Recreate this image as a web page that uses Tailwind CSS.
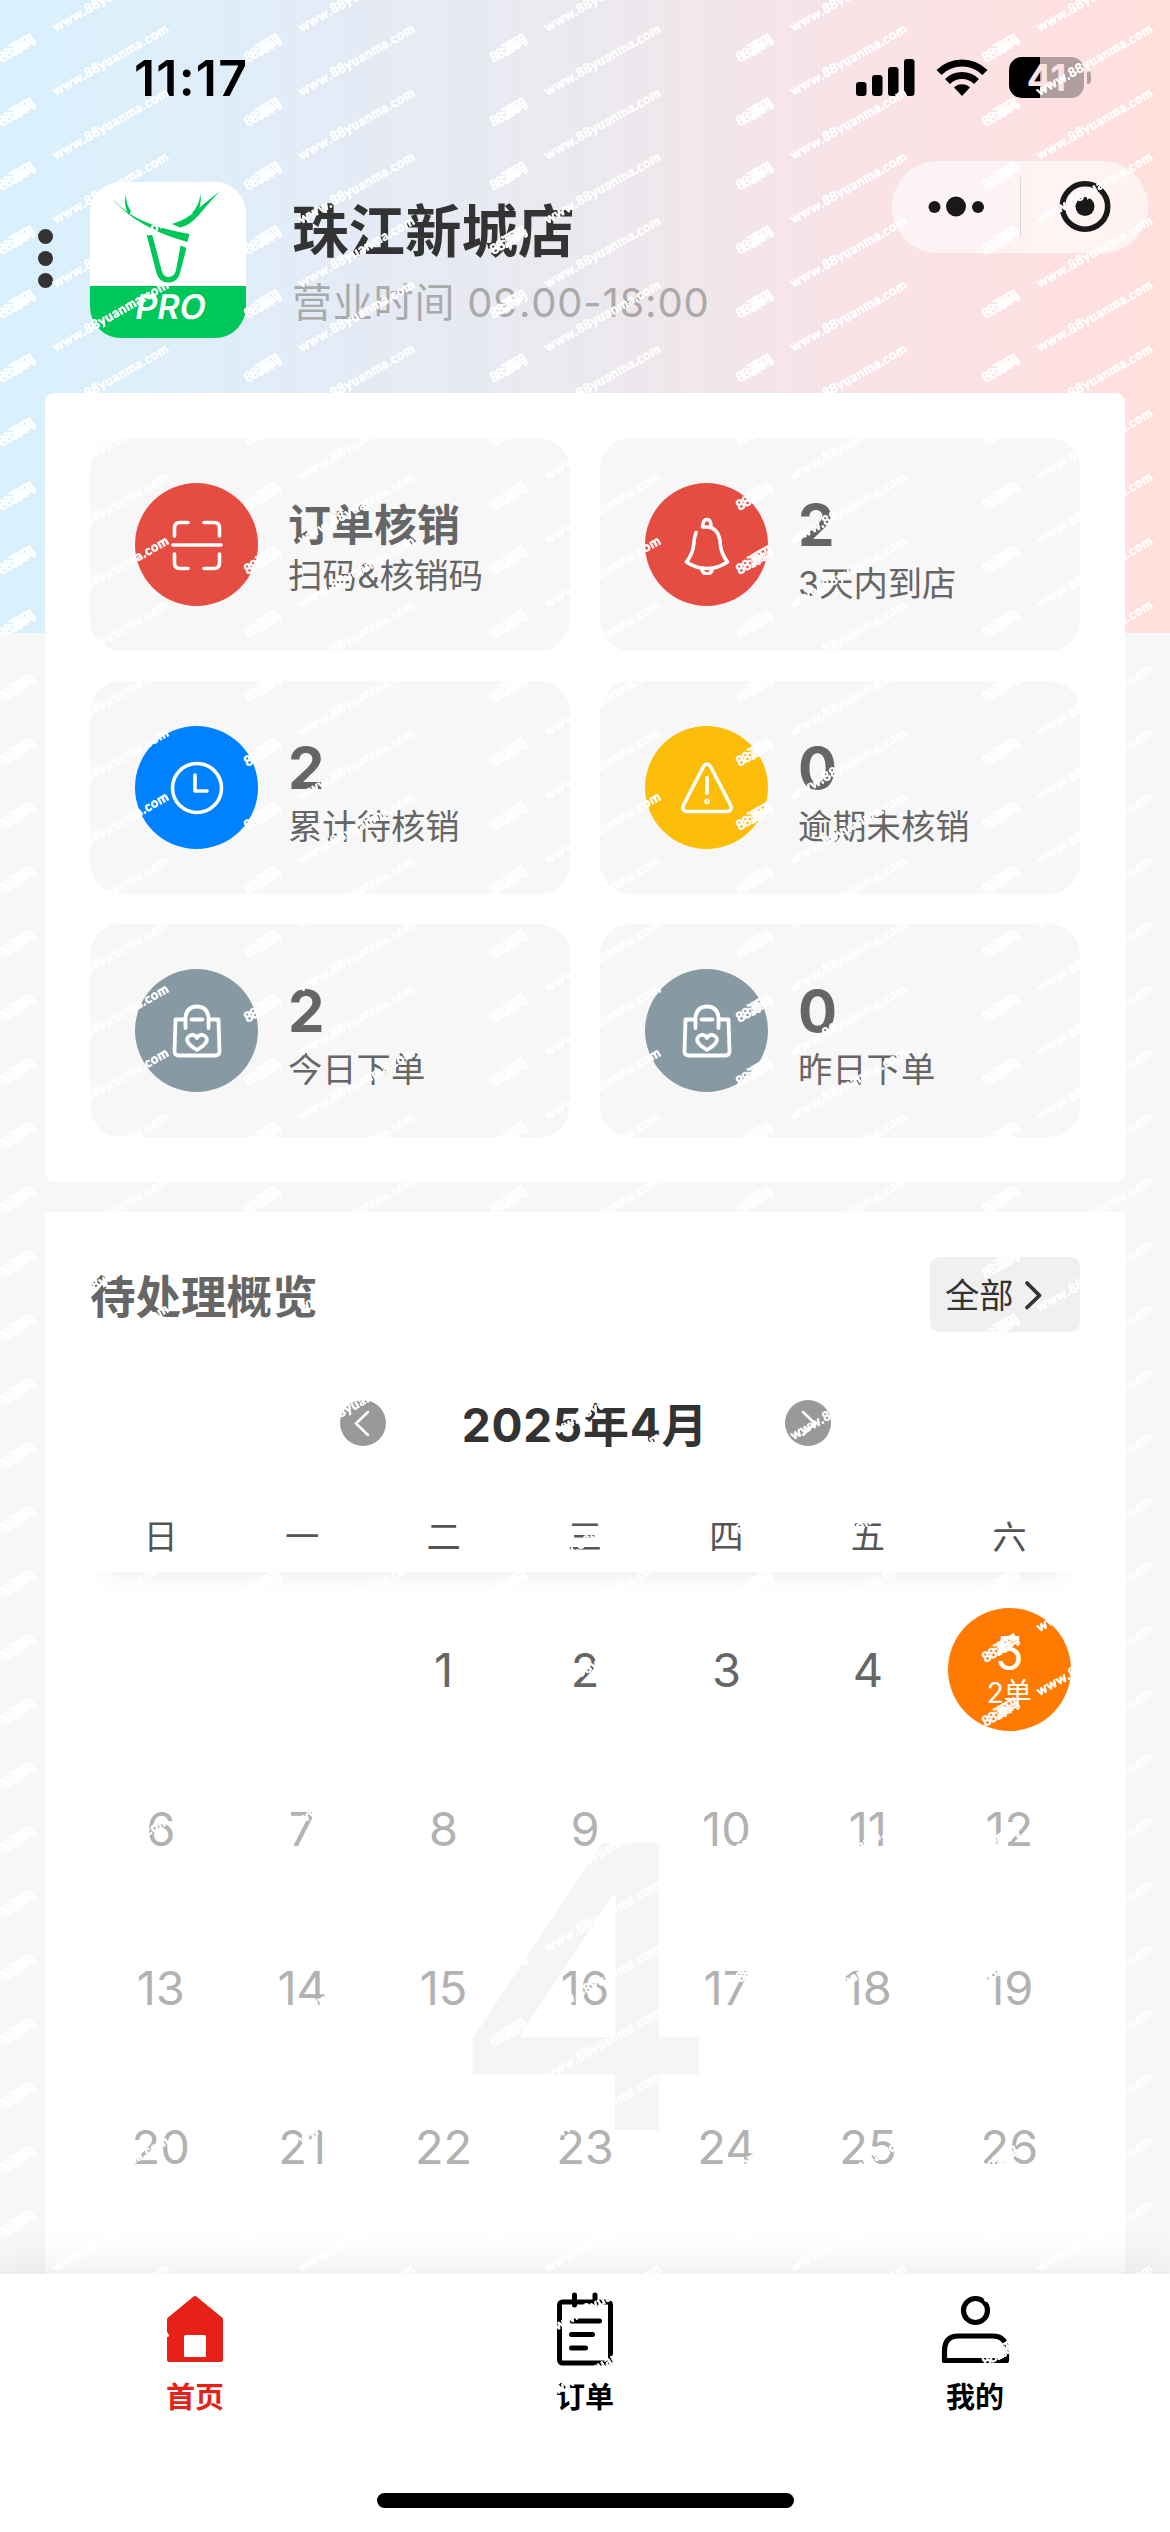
<!DOCTYPE html>
<html lang="zh-CN">
<head>
<meta charset="utf-8">
<title>珠江新城店</title>
<script src="https://cdn.jsdelivr.net/npm/@tailwindcss/browser@4"></script>
</head>
<body class="relative w-[1170px] h-[2532px] overflow-hidden bg-[#f7f7f7] font-['Inter','Noto_Sans_CJK_SC',sans-serif] text-[#666]">

<!-- header gradient -->
<div class="absolute inset-x-0 top-0 h-[633px] bg-[linear-gradient(to_right,#d8f1fd_0%,#e4ebf6_30%,#ebe9ef_50%,#f6e4e8_68%,#ffe0e1_92%,#ffe0dc_100%)]"></div>

<div class="relative flex flex-col h-[2274px] overflow-hidden">
  <!-- status bar -->
  <div class="flex h-[160px] shrink-0 items-start pl-[134px] pr-[79px]">
    <div class="mt-[48px] text-[50px] leading-[60px] font-semibold text-black tracking-[1.200px]">11:17</div>
    <div class="ml-auto mt-[57px] flex items-start">
      <svg class="mt-[2px] mr-[21px]" width="59" height="37" viewBox="0 0 59 37"><rect x="0" y="23" width="10.5" height="14" rx="3"/><rect x="16" y="16" width="10.5" height="21" rx="3"/><rect x="32" y="8" width="10.5" height="29" rx="3"/><rect x="48" y="0" width="10.5" height="37" rx="3"/></svg>
      <svg class="mt-[2px] mr-[21px]" width="52" height="37" viewBox="0 0 52 37"><g fill="none" stroke="#000" stroke-width="7"><path d="M3 13.5a32.500 32.500 0 0 1 46 0"/><path d="M11.500 22.500a20.500 20.500 0 0 1 29 0"/></g><path d="M26 37l-8-8.500a11.500 11.500 0 0 1 16 0z"/></svg>
      <div class="h-[41px] w-[75px] rounded-[13px] bg-[linear-gradient(to_right,#000_31px,#b09d9f_31px)] text-center text-[37px] leading-[41px] font-bold text-[#fbe2e4]">41</div>
      <div class="ml-[3px] mt-[14px] h-[13px] w-[4px] rounded-r-full bg-[#b09d9f]"></div>
    </div>
  </div>

  <!-- shop header -->
  <div class="flex h-[233px] shrink-0 items-start pl-[37px] pr-[21px]">
    <div class="mt-[69px] flex w-[16px] flex-col items-center gap-[7px]">
      <i class="size-[15px] rounded-full bg-[#333]"></i><i class="size-[15px] rounded-full bg-[#333]"></i><i class="size-[15px] rounded-full bg-[#333]"></i>
    </div>
    <div class="relative ml-[37px] mt-[22px] flex size-[156px] flex-col overflow-hidden rounded-[31px] bg-white">
      <svg width="156" height="104" viewBox="0 0 156 104" fill="#00c75a" stroke="none">
        <path d="M17.500 11Q28 24 41 32.500Q60 45 99.500 52L97.500 60Q72 53 55 43Q33 31 17.500 11z"/>
        <path d="M36 12Q36 23 41 29L39 33Q33 24 36 12z"/>
        <path d="M130 9Q117 23 109 33Q99 44 90 45.500L82 42Q98 37 107 27.500z"/>
        <path d="M110.500 12Q112 22 107 32L102 31Q109 24 110.500 12z"/>
        <path d="M56 50.500L62.500 53.500L71.500 88Q73 95 78.500 95Q84.500 95 86 88L90.500 63.500L96.500 66L90 91Q87.500 100.500 78.500 100.500Q69 100.500 66.500 91z"/>
      </svg>
      <div class="flex h-[52px] justify-center bg-[#00c75a] pl-[4px] text-[34px] leading-[42px] font-semibold text-white"><span class="-skew-x-10">PRO</span></div>
    </div>
    <div class="ml-[46px] mt-[34px]">
      <h1 class="h-[74px] text-[56.500px] leading-[76px] font-bold text-[#333]">珠江新城店</h1>
      <p class="h-[64px] text-[40px] leading-[69px] tracking-[0.800px] text-[#aaa]">营业时间 09:00-18:00</p>
    </div>
    <div class="ml-auto flex h-[94px] w-[258px] items-center rounded-full border border-black/5 bg-white/60">
      <svg width="256" height="92" viewBox="0 0 256 92"><g fill="#191919"><circle cx="42.500" cy="46" r="6"/><circle cx="64" cy="45.500" r="10"/><circle cx="86" cy="46" r="6"/><circle cx="193" cy="45.500" r="9.500"/></g><circle cx="193" cy="45.500" r="22.700" fill="none" stroke="#191919" stroke-width="5.600"/><path d="M128.500 16v60" stroke="#000" stroke-opacity=".12"/></svg>
    </div>
  </div>

  <!-- statistics -->
  <section class="mx-[45px] grid shrink-0 grid-cols-2 gap-[30px] rounded-[9px] bg-white p-[45px]">
    <div class="flex h-[213px] items-center rounded-[31px] bg-[#f7f7f7] pl-[45px]">
      <div class="flex size-[123px] items-center justify-center rounded-full bg-[#e54d42]">
        <svg width="56" height="56" viewBox="0 0 56 56" fill="none" stroke="#fff" stroke-width="3.600" stroke-linecap="round" stroke-linejoin="round"><path d="M4 28h48M5.500 19v-8q0-5.500 5.500-5.500h8M35 5.500h10q5.500 0 5.500 5.500v8M5.500 37v9q0 5.500 5.500 5.500h8M35 51.500h10q5.500 0 5.500-5.500v-9"/></svg>
      </div>
      <div class="ml-[30px] pt-[13px]">
        <div class="h-[56px] text-[43px] leading-[48px] font-bold">订单核销</div>
        <div class="h-[44px] text-[34.600px] leading-[36px]">扫码&amp;核销码</div>
      </div>
    </div>
    <div class="flex h-[213px] items-center rounded-[31px] bg-[#f7f7f7] pl-[45px]">
      <div class="flex size-[123px] items-center justify-center rounded-full bg-[#e54d42]">
        <svg width="56" height="60" viewBox="0 0 56 60" fill="none" stroke="#fff" stroke-width="3.600" stroke-linecap="round" stroke-linejoin="round"><path d="M17 17.500Q15 23 14.500 31Q13.500 39 7.500 47Q17 53.500 28 53.500Q39 53.500 48.500 47Q42.500 39 41.500 31Q41 12 27 12Q24 12 23.500 12Q24 4.500 28 4.500Q32 4.500 32 11.500M22.500 54Q24 59 28 59Q32 59 33.500 54"/></svg>
      </div>
      <div class="ml-[30px] pt-[13px]">
        <div class="h-[64px] text-[58px] leading-[60px] font-bold">2</div>
        <div class="h-[48px] text-[34.300px] leading-[50px]">3天内到店</div>
      </div>
    </div>
    <div class="flex h-[213px] items-center rounded-[31px] bg-[#f7f7f7] pl-[45px]">
      <div class="flex size-[123px] items-center justify-center rounded-full bg-[#0081ff]">
        <svg width="56" height="56" viewBox="0 0 56 56" fill="none" stroke="#fff" stroke-width="3.600" stroke-linecap="round" stroke-linejoin="round"><circle cx="28" cy="28" r="24.500"/><path d="M26 15v16h12"/></svg>
      </div>
      <div class="ml-[30px] pt-[13px]">
        <div class="h-[64px] text-[58px] leading-[60px] font-bold">2</div>
        <div class="h-[48px] text-[34.300px] leading-[50px]">累计待核销</div>
      </div>
    </div>
    <div class="flex h-[213px] items-center rounded-[31px] bg-[#f7f7f7] pl-[45px]">
      <div class="flex size-[123px] items-center justify-center rounded-full bg-[#fbbd08]">
        <svg width="56" height="56" viewBox="0 0 56 56" fill="none" stroke="#fff" stroke-width="3.600" stroke-linecap="round" stroke-linejoin="round"><path d="M24.500 6.500Q28 1.500 31.500 6.500L51.500 45Q54 51 48 51.500H8Q2 51 4.500 45zM28 17.500v16"/><circle cx="28" cy="41.500" r=".9"/></svg>
      </div>
      <div class="ml-[30px] pt-[13px]">
        <div class="h-[64px] text-[58px] leading-[60px] font-bold">0</div>
        <div class="h-[48px] text-[34.300px] leading-[50px]">逾期未核销</div>
      </div>
    </div>
    <div class="flex h-[213px] items-center rounded-[31px] bg-[#f7f7f7] pl-[45px]">
      <div class="flex size-[123px] items-center justify-center rounded-full bg-[#8799a3]">
        <svg width="56" height="60" viewBox="0 0 56 60" fill="none" stroke="#fff" stroke-width="3.800" stroke-linecap="round" stroke-linejoin="round"><path d="M16.500 18.500H6.500L5.500 50Q5.500 54.500 10 54.500H46Q50.500 54.500 50.500 50L49.500 18.500H39.500M16.500 27V16Q18 5.500 28 5.500Q38 5.500 39.500 16V27M22.500 18.500h11M28 37Q26 33.500 22.500 34Q17 35.500 18.500 40.500Q20 44 28 49Q36 44 37.500 40.500Q39 35.500 33.500 34Q30 33.500 28 37z"/></svg>
      </div>
      <div class="ml-[30px] pt-[13px]">
        <div class="h-[64px] text-[58px] leading-[60px] font-bold">2</div>
        <div class="h-[48px] text-[34.300px] leading-[50px]">今日下单</div>
      </div>
    </div>
    <div class="flex h-[213px] items-center rounded-[31px] bg-[#f7f7f7] pl-[45px]">
      <div class="flex size-[123px] items-center justify-center rounded-full bg-[#8799a3]">
        <svg width="56" height="60" viewBox="0 0 56 60" fill="none" stroke="#fff" stroke-width="3.800" stroke-linecap="round" stroke-linejoin="round"><path d="M16.500 18.500H6.500L5.500 50Q5.500 54.500 10 54.500H46Q50.500 54.500 50.500 50L49.500 18.500H39.500M16.500 27V16Q18 5.500 28 5.500Q38 5.500 39.500 16V27M22.500 18.500h11M28 37Q26 33.500 22.500 34Q17 35.500 18.500 40.500Q20 44 28 49Q36 44 37.500 40.500Q39 35.500 33.500 34Q30 33.500 28 37z"/></svg>
      </div>
      <div class="ml-[30px] pt-[13px]">
        <div class="h-[64px] text-[58px] leading-[60px] font-bold">0</div>
        <div class="h-[48px] text-[34.300px] leading-[50px]">昨日下单</div>
      </div>
    </div>
  </section>

  <!-- calendar -->
  <section class="mx-[45px] mt-[30px] h-[1100px] shrink-0 bg-white px-[45px] pt-[45px]">
    <div class="flex h-[75px] items-center justify-between">
      <h2 class="h-[70px] text-[45.500px] leading-[75px] font-bold">待处理概览</h2>
      <div class="flex h-[75px] w-[150px] items-center rounded-[9px] bg-[#f0f0f0] pl-[15px] text-[34.300px] text-[#333]"><span class="pt-[3px]">全部</span>
        <svg class="ml-[9px]" width="20" height="32" viewBox="0 0 20 32" fill="none" stroke="#333" stroke-width="3.800" stroke-linecap="round" stroke-linejoin="round"><path d="M4 4l12.500 12.500L4 28.500"/></svg>
      </div>
    </div>
    <div class="mt-[60px] flex h-[62px] items-center justify-center">
      <div class="flex size-[46px] items-center justify-center rounded-full bg-[#999]"><svg width="46" height="46" fill="none" stroke="#fff" stroke-width="2.500" stroke-linecap="round"><path d="M28 12L16 23.500L28 35"/></svg></div>
      <div class="w-[399px] pt-[3px] text-center text-[46px] leading-[62px] font-bold tracking-[0.700px] text-[#333]">2025年4月</div>
      <div class="flex size-[46px] items-center justify-center rounded-full bg-[#999]"><svg width="46" height="46" fill="none" stroke="#fff" stroke-width="2.500" stroke-linecap="round"><path d="M18 12L30 23.500L18 35"/></svg></div>
    </div>
    <div class="mt-[46px] grid h-[72px] grid-cols-7 bg-white text-center text-[34.300px] leading-[74px] text-[#555] shadow-[0_20px_26px_-18px_rgba(0,0,0,0.08)]">
      <span>日</span><span>一</span><span>二</span><span>三</span><span>四</span><span>五</span><span>六</span>
    </div>
    <div class="relative mt-[18px]">
      <div class="absolute inset-x-0 top-[159px] flex justify-center text-[394px] leading-[476px] font-[450] text-[#f5f5f5]"><span class="scale-x-105">4</span></div>
      <div class="relative grid grid-cols-7 text-center text-[47px] leading-[159px] text-[#b2b2b2]" id="days"></div>
    </div>
  </section>
</div>

<!-- tab bar -->
<nav class="relative flex h-[258px] flex-col bg-white text-center text-[29px] leading-[44px] font-bold text-black shadow-[0_0_46px_rgba(0,0,0,0.1)]">
  <div class="grid grid-cols-3">
    <div class="flex flex-col items-center pt-[14px] text-[#e62117]">
      <svg width="76" height="88" viewBox="0 0 76 88"><path fill="#e62117" fill-rule="evenodd" d="M36 9q2-2 4 0L65 29.500q1 1 1 2V72q0 2-2 2H12q-2 0-2-2V31.500q0-1 1-2zM29 47q-2 0-2 2V69h22V49q0-2-2-2z"/></svg>
      <span>首页</span>
    </div>
    <div class="flex flex-col items-center pt-[14px]">
      <svg width="76" height="88" viewBox="0 0 76 88" fill="none" stroke="#000" stroke-width="5" stroke-linecap="round"><rect x="12.500" y="14" width="51" height="61" rx="3"/><path d="M27.500 7v10M48 7v10M24.500 33h28M24.500 46.500h21M24.500 60h14"/></svg>
      <span>订单</span>
    </div>
    <div class="flex flex-col items-center pt-[14px]">
      <svg width="76" height="88" viewBox="0 0 76 88" fill="none" stroke="#000" stroke-width="5.200" stroke-linejoin="round"><circle cx="38.500" cy="22.500" r="12"/><path d="M7.500 72.500V63Q7.500 48 21.500 48H55.500Q69.500 48 69.500 63V72.500z"/></svg>
      <span>我的</span>
    </div>
  </div>
  <div class="mx-auto mt-auto mb-[24px] h-[15px] w-[417px] rounded-full bg-black"></div>
</nav>

<!-- watermark -->
<svg class="pointer-events-none absolute inset-x-0 top-0" width="1170" height="2480">
  <defs>
    <g id="wm" fill="#fff" stroke="#fff" stroke-width=".7" font-weight="700">
      <text transform="translate(55.500 32) rotate(-29.500)" font-size="13" textLength="131" font-family="Lato, Inter, sans-serif">www.88yuanma.com</text>
      <text transform="translate(247.500 63) rotate(-30.600)" font-size="14" textLength="41" font-family="Lato, 'Noto Sans CJK SC', sans-serif">88源码</text>
      <text transform="translate(1.500 63) rotate(-30.600)" font-size="14" textLength="41" font-family="Lato, 'Noto Sans CJK SC', sans-serif">88源码</text>
    </g>
    <pattern id="tile" width="246" height="64" patternUnits="userSpaceOnUse"><use href="#wm"/><use href="#wm" y="64"/><use href="#wm" y="-64"/></pattern>
  </defs>
  <rect width="1170" height="2480" fill="url(#tile)"/>
</svg>

<script>
  const days = document.getElementById('days');
  let html = '<span></span><span></span>';
  for (let d = 1; d <= 26; d++) {
    if (d < 5) html += '<span class="text-[#666]">' + d + '</span>';
    else if (d === 5) html += '<span class="flex items-center justify-center"><span class="flex size-[123px] flex-col items-center rounded-full bg-[#ff7a00] pt-[22px] text-white"><b class="text-[47px] leading-[46px] font-normal">5</b><b class="text-[28px] leading-[34px] font-normal">2单</b></span></span>';
    else html += '<span>' + d + '</span>';
  }
  days.innerHTML = html;
</script>
</body>
</html>
